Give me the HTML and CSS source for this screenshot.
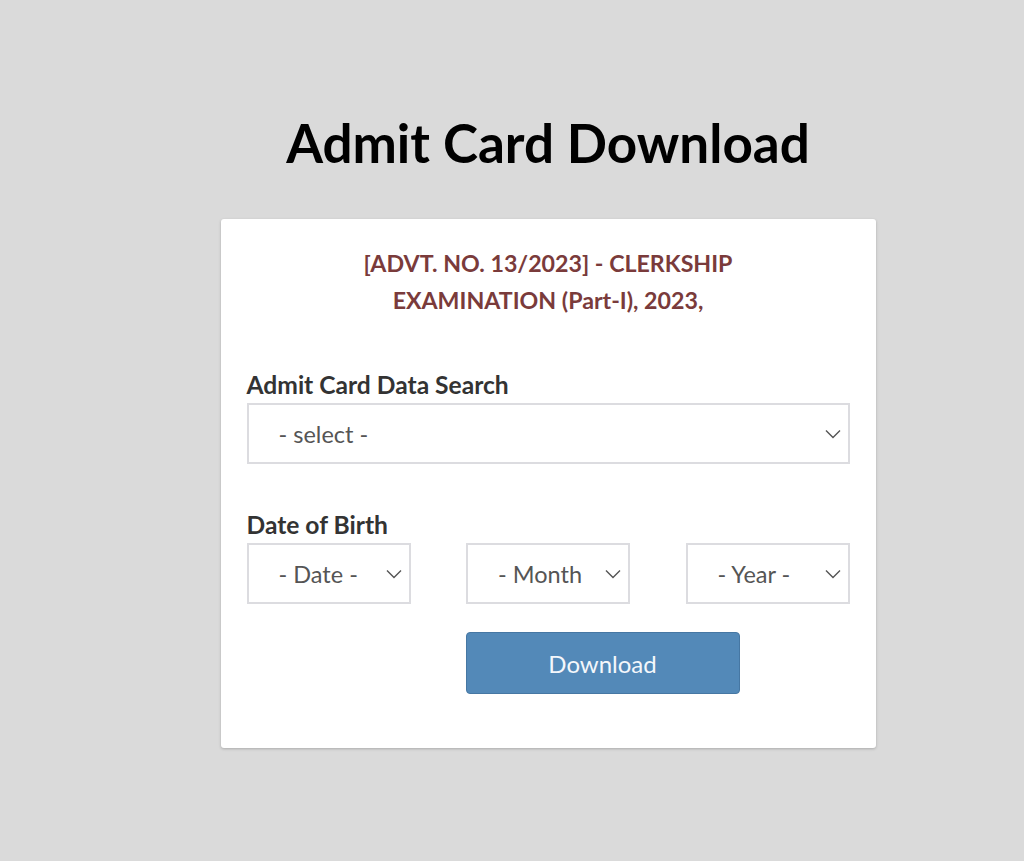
FILE: index.html
```html
<!DOCTYPE html>
<html lang="en">
<head>
<meta charset="utf-8">
<title>Admit Card Download</title>
<link rel="stylesheet" href="styles.css">
</head>
<body>
<main class="page">
  <h1 class="title">Admit Card Download</h1>
  <section class="card">
    <h2 class="advt">[ADVT. NO. 13/2023] - CLERKSHIP<br>EXAMINATION (Part-I), 2023,</h2>
    <form class="form">
      <div class="field">
        <label class="label">Admit Card Data Search</label>
        <div class="select select-full"><span class="select-text">- select -</span><svg class="chev" viewBox="0 0 16 10"><path d="M1 1.5 L8 8.5 L15 1.5" fill="none" stroke="#555" stroke-width="1.4"/></svg></div>
      </div>
      <div class="field">
        <label class="label">Date of Birth</label>
        <div class="dob">
          <div class="select"><span class="select-text">- Date -</span><svg class="chev" viewBox="0 0 16 10"><path d="M1 1.5 L8 8.5 L15 1.5" fill="none" stroke="#555" stroke-width="1.4"/></svg></div>
          <div class="select"><span class="select-text">- Month</span><svg class="chev" viewBox="0 0 16 10"><path d="M1 1.5 L8 8.5 L15 1.5" fill="none" stroke="#555" stroke-width="1.4"/></svg></div>
          <div class="select"><span class="select-text">- Year -</span><svg class="chev" viewBox="0 0 16 10"><path d="M1 1.5 L8 8.5 L15 1.5" fill="none" stroke="#555" stroke-width="1.4"/></svg></div>
        </div>
        <div class="actions">
          <button type="button" class="btn">Download</button>
        </div>
      </div>
    </form>
  </section>
</main>
</body>
</html>
```

FILE: styles.css
```css
* { box-sizing: border-box; }
html, body { margin: 0; padding: 0; }
body {
  background: #dadada;
  font-family: Lato, "Open Sans", sans-serif;
  color: #333;
  min-height: 861px;
}
.page {
  padding: 110px 0 0 72px;
  display: flex;
  flex-direction: column;
  align-items: center;
}
.title {
  margin: 0;
  font-size: 53px;
  font-weight: 700;
  color: #000;
  line-height: 66px;
}
.card {
  margin-top: 43px;
  width: 655px;
  background: #fff;
  border-radius: 3px;
  box-shadow: 0 1px 3px rgba(0,0,0,0.22);
  padding: 26px 26px 54px;
}
.advt {
  margin: 0;
  text-align: center;
  color: #7a3b3b;
  font-size: 23.2px;
  font-weight: 700;
  line-height: 37px;
}
.form { margin-top: 50px; }
.field { display: flex; flex-direction: column; }
.field + .field { margin-top: 45px; }
.label {
  font-size: 24.6px;
  font-weight: 700;
  color: #333;
  line-height: 32px;
  margin-bottom: 2px;
}
.select {
  height: 61px;
  border: 2px solid #dcdce0;
  background: #fff;
  display: flex;
  align-items: center;
  justify-content: space-between;
  padding: 0 7px 0 30px;
  font-size: 23.5px;
  color: #555;
}
.select-text { white-space: nowrap; }
.chev { width: 16px; height: 10px; flex: none; }
.dob {
  display: grid;
  grid-template-columns: 164px 164px 164px;
  justify-content: space-between;
}
.actions {
  display: grid;
  grid-template-columns: 164px 1fr;
  column-gap: 55px;
  margin-top: 28px;
}
.btn {
  grid-column: 2;
  width: 274px;
  height: 62px;
  background: #5389b8;
  border: 1px solid #4677a3;
  border-radius: 4px;
  color: #f4f7fb;
  font-family: inherit;
  font-size: 24px;
  font-weight: 400;
  padding: 0;
}
```
